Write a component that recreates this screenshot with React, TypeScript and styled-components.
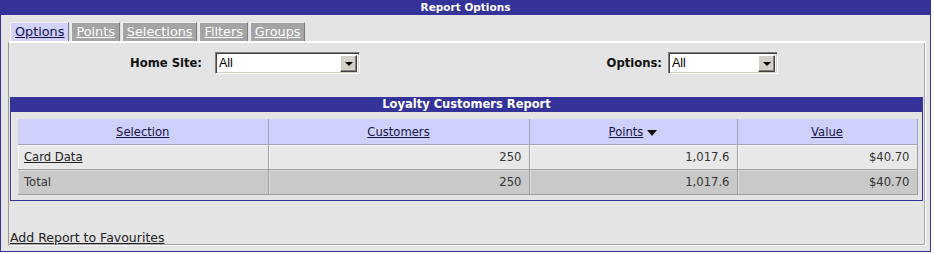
import { FC } from "react";
import styled, { createGlobalStyle } from "styled-components";

const GlobalStyle = createGlobalStyle`
  html, body {
    margin: 0;
    padding: 0;
    background: #fff;
  }
  body {
    font-family: "DejaVu Sans", Verdana, sans-serif;
  }
`;

const StyledFrame = styled.div`
  width: 931px;
  height: 252px;
  box-sizing: border-box;
  border: 1px solid #333399;
  border-top: 0;
  background: #e4e4e4;
  display: flex;
  flex-direction: column;
`;

const StyledTitle = styled.div`
  height: 15px;
  margin: 0 -1px;
  background: #333399;
  color: #fff;
  font-size: 10.5px;
  font-weight: bold;
  line-height: 15px;
  text-align: center;
`;

const StyledContent = styled.div`
  flex: 1;
  display: flex;
  flex-direction: column;
  padding: 7px 4px 6px 7px;
`;

const StyledTabRow = styled.div`
  display: flex;
  gap: 2px;
  height: 19px;
  margin-left: 2px;
`;

const StyledTab = styled.a<{ $active?: boolean }>`
  box-sizing: border-box;
  height: 19px;
  padding: 0 4px;
  border: 1px solid;
  border-color: #f0f0f0 #7c7c7c #7c7c7c #f0f0f0;
  border-bottom: 0;
  background: ${(p) => (p.$active ? "#d2d2fa" : "#a4a4a4")};
  color: ${(p) => (p.$active ? "#10104a" : "#fff")};
  font-size: 12.8px;
  line-height: 18px;
  text-decoration: underline;
  cursor: pointer;
`;

const StyledPanel = styled.div`
  flex: 1;
  display: flex;
  flex-direction: column;
  padding-top: 9px;
  border-top: 2px solid #fff;
  border-left: 1px solid #9a9a9a;
  border-right: 1px solid #fff;
  border-bottom: 1px solid #fff;
  box-shadow: inset -1px -1px 0 #a8a8a8;
`;

const StyledFilterRow = styled.div`
  display: grid;
  grid-template-columns: 206px 145px 308px 110px 1fr;
  align-items: center;
  height: 22px;
`;

const StyledFilterLabel = styled.div<{ $gap: number }>`
  padding-right: ${(p) => p.$gap}px;
  text-align: right;
  font-size: 11.6px;
  font-weight: bold;
  color: #111;
`;

const StyledSelect = styled.div`
  box-sizing: border-box;
  height: 22px;
  display: flex;
  align-items: center;
  padding: 2px 2px 2px 3px;
  border: 1px solid;
  border-color: #808080 #fff #fff #808080;
  box-shadow: inset 1px 1px 0 #404040, inset -1px -1px 0 #d4d0c8;
  background: #fff;
`;

const StyledSelectValue = styled.span`
  flex: 1;
  font-family: "Liberation Sans", Arial, sans-serif;
  font-size: 12.5px;
  color: #000;
`;

const StyledSelectButton = styled.span`
  box-sizing: border-box;
  width: 17px;
  height: 17px;
  display: flex;
  align-items: center;
  justify-content: center;
  background: #d4d0c8;
  border: 1px solid;
  border-color: #fff #404040 #404040 #fff;
  box-shadow: inset -1px -1px 0 #808080;

  &::after {
    content: "";
    border-left: 4px solid transparent;
    border-right: 4px solid transparent;
    border-top: 4px solid #000;
    margin-top: 1px;
  }
`;

const Select: FC<{ value: string }> = (props) => {
  return (
    <StyledSelect>
      <StyledSelectValue>{props.value}</StyledSelectValue>
      <StyledSelectButton />
    </StyledSelect>
  );
};

const StyledReportBox = styled.div`
  margin: 23px 2px 0 1px;
  border: 1px solid #333399;
  border-top: 0;
`;

const StyledReportHeader = styled.div`
  height: 15px;
  margin: 0 -1px;
  background: #333399;
  color: #fff;
  font-size: 11.5px;
  font-weight: bold;
  line-height: 15px;
  text-align: center;
`;

const StyledReportBody = styled.div`
  padding: 7px 5px 5px 7px;
  box-shadow: inset 1px 0 0 #f4f4f4;
`;

const StyledTable = styled.table`
  width: 899px;
  table-layout: fixed;
  border-collapse: collapse;
  font-size: 11.6px;
`;

const StyledHeadCell = styled.th`
  height: 25px;
  padding: 0;
  background: #d0d0fc;
  border-right: 1px solid #a4a4b8;
  border-bottom: 1px solid #a4a4b8;
  font-weight: normal;
  text-align: center;
  vertical-align: middle;
`;

const StyledHeadLink = styled.a`
  color: #14144a;
  text-decoration: underline;
  cursor: pointer;
`;

const StyledCell = styled.td<{ $total?: boolean; $align?: "left" | "right" }>`
  height: 24px;
  padding: 0 7px 0 6px;
  background: ${(p) => (p.$total ? "#c9c9c9" : "#e8e8e8")};
  border-right: 1px solid #a0a0a0;
  border-bottom: 1px solid #a0a0a0;
  box-shadow: inset 1px 1px 0 ${(p) => (p.$total ? "#dcdcdc" : "#f6f6f6")};
  color: #333;
  text-align: ${(p) => p.$align || "left"};
  vertical-align: middle;
`;

const StyledCellLink = styled.a`
  color: #222;
  text-decoration: underline;
  cursor: pointer;
`;

const StyledAddLink = styled.a`
  display: block;
  margin: 30px 0 0 1px;
  font-size: 12.5px;
  line-height: 14px;
  color: #222;
  text-decoration: underline;
  cursor: pointer;
`;

const SortArrow: FC = () => (
  <svg width="10" height="6" viewBox="0 0 10 6" style={{ marginLeft: 4 }}>
    <path d="M0 0 L10 0 L5 6 Z" fill="#111" />
  </svg>
);

const rows = [
  { name: "Card Data", customers: "250", points: "1,017.6", value: "$40.70", total: false },
  { name: "Total", customers: "250", points: "1,017.6", value: "$40.70", total: true },
];

const tabs = ["Options", "Points", "Selections", "Filters", "Groups"];

const App: FC = () => {
  return (
    <>
      <GlobalStyle />
      <StyledFrame>
        <StyledTitle>Report Options</StyledTitle>
        <StyledContent>
          <StyledTabRow>
            {tabs.map((t, i) => (
              <StyledTab key={t} $active={i === 0}>
                {t}
              </StyledTab>
            ))}
          </StyledTabRow>
          <StyledPanel>
            <StyledFilterRow>
              <StyledFilterLabel $gap={13}>Home Site:</StyledFilterLabel>
              <Select value="All" />
              <StyledFilterLabel $gap={6}>Options:</StyledFilterLabel>
              <Select value="All" />
            </StyledFilterRow>
            <StyledReportBox>
              <StyledReportHeader>Loyalty Customers Report</StyledReportHeader>
              <StyledReportBody>
                <StyledTable>
                  <colgroup>
                    <col style={{ width: 250 }} />
                    <col style={{ width: 261 }} />
                    <col style={{ width: 208 }} />
                    <col style={{ width: 180 }} />
                  </colgroup>
                  <thead>
                    <tr>
                      <StyledHeadCell>
                        <StyledHeadLink>Selection</StyledHeadLink>
                      </StyledHeadCell>
                      <StyledHeadCell>
                        <StyledHeadLink>Customers</StyledHeadLink>
                      </StyledHeadCell>
                      <StyledHeadCell>
                        <StyledHeadLink>Points</StyledHeadLink>
                        <SortArrow />
                      </StyledHeadCell>
                      <StyledHeadCell>
                        <StyledHeadLink>Value</StyledHeadLink>
                      </StyledHeadCell>
                    </tr>
                  </thead>
                  <tbody>
                    {rows.map((r) => (
                      <tr key={r.name}>
                        <StyledCell $total={r.total}>
                          {r.total ? r.name : <StyledCellLink>{r.name}</StyledCellLink>}
                        </StyledCell>
                        <StyledCell $total={r.total} $align="right">
                          {r.customers}
                        </StyledCell>
                        <StyledCell $total={r.total} $align="right">
                          {r.points}
                        </StyledCell>
                        <StyledCell $total={r.total} $align="right">
                          {r.value}
                        </StyledCell>
                      </tr>
                    ))}
                  </tbody>
                </StyledTable>
              </StyledReportBody>
            </StyledReportBox>
            <StyledAddLink>Add Report to Favourites</StyledAddLink>
          </StyledPanel>
        </StyledContent>
      </StyledFrame>
    </>
  );
};

export default App;
